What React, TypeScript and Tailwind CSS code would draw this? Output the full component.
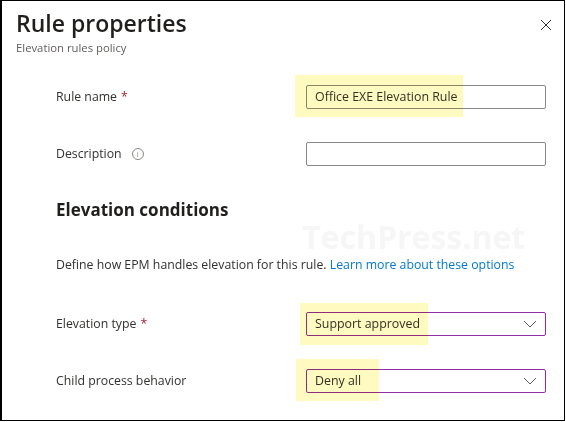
import { ReactNode } from "react";

const font = { fontFamily: '"Open Sans", "Noto Sans", Arial, sans-serif' };

function Marker({ className }: { className: string }) {
  // translucent highlighter stroke laid over a field
  return (
    <span
      className={`pointer-events-none absolute bg-[#fffac0] mix-blend-multiply ${className}`}
    />
  );
}

function Chevron() {
  return (
    <svg width="14" height="8" viewBox="0 0 14 8" className="text-[#605e5c]">
      <path d="M1 1l6 6 6-6" fill="none" stroke="currentColor" strokeWidth="1" />
    </svg>
  );
}

function Row({
  label,
  required,
  extra,
  children,
  className = "",
}: {
  label: string;
  required?: boolean;
  extra?: ReactNode;
  children: ReactNode;
  className?: string;
}) {
  return (
    <div className={`flex items-center h-6 ${className}`}>
      <div className="w-[250px] flex items-center text-[12.3px] text-[#323130]">
        {label}
        {required && <span className="ml-1 text-[#a4262c]">*</span>}
        {extra}
      </div>
      <div className="relative w-[240px] h-6">{children}</div>
    </div>
  );
}

export default function App() {
  return (
    <div
      className="relative w-[565px] h-[421px] bg-white border border-black border-l-2 overflow-hidden"
      style={font}
    >
      {/* header */}
      <div className="flex justify-between pl-[14px] pr-[12px] pt-[7px]">
        <div>
          <h1 className="text-[23px] leading-[30px] font-semibold text-[#201f1e]">
            Rule properties
          </h1>
          <p className="mt-[2px] text-[11.3px] leading-[16px] text-[#605e5c]">
            Elevation rules policy
          </p>
        </div>
        <svg width="12" height="12" viewBox="0 0 12 12" className="mt-[11px] text-[#323130]">
          <path d="M1 1l10 10M11 1L1 11" stroke="currentColor" strokeWidth="1" />
        </svg>
      </div>

      {/* watermark */}
      <div className="pointer-events-none absolute left-[300px] top-[222px] text-[32px] leading-[28px] font-bold text-[#f6f6f6]">
        TechPress.net
      </div>

      <div className="pl-[54px] flex flex-col">
        <Row label="Rule name" required className="mt-[29px]">
          <div className="h-6 border border-[#8a8886] rounded-[2px] px-2 flex items-center text-[12.4px] text-[#323130]">
            Office EXE Elevation Rule
          </div>
          <Marker className="-left-[11px] -top-[10px] w-[168px] h-[42px]" />
        </Row>

        <Row
          label="Description"
          className="mt-[33px]"
          extra={
            <span className="ml-[10px] w-3 h-3 rounded-full border border-[#8a8886] text-[8px] leading-none flex items-center justify-center text-[#8a8886]">
              i
            </span>
          }
        >
          <div className="h-6 border border-[#8a8886] rounded-[2px]" />
        </Row>

        <h2 className="mt-[32px] text-[17px] leading-6 font-bold text-[#201f1e]">
          Elevation conditions
        </h2>

        <p className="mt-[34px] text-[12.3px] leading-[18px] text-[#323130]">
          Define how EPM handles elevation for this rule.{" "}
          <span className="text-[#0078d4]">Learn more about these options</span>
        </p>

        <Row label="Elevation type" required className="mt-[38px]">
          <div className="h-6 border border-[#8e2fa6] rounded-[2px] pl-2 pr-2 flex items-center justify-between text-[12.4px] text-[#323130]">
            Support approved
            <Chevron />
          </div>
          <Marker className="-left-[6px] -top-[9px] w-[128px] h-[42px]" />
        </Row>

        <Row label="Child process behavior" className="mt-[33px]">
          <div className="h-6 border border-[#8e2fa6] rounded-[2px] pl-2 pr-2 flex items-center justify-between text-[12.4px] text-[#323130]">
            Deny all
            <Chevron />
          </div>
          <Marker className="-left-[10px] -top-[10px] w-[83px] h-[42px]" />
        </Row>
      </div>
    </div>
  );
}
